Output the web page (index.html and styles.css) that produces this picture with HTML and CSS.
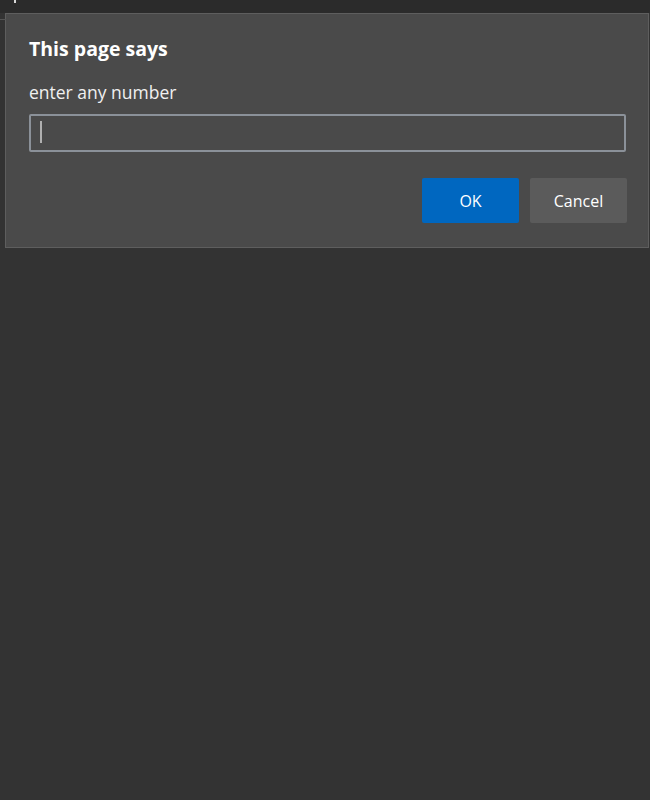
FILE: index.html
```html
<!DOCTYPE html>
<html>
<head>
<meta charset="utf-8">
<link rel="stylesheet" href="styles.css">
</head>
<body>
<div class="topbar"><span class="tick"></span><span class="sep"></span></div>
<div class="dialog">
  <div class="title">This page says</div>
  <div class="message">enter any number</div>
  <div class="field"><span class="caret"></span></div>
  <div class="actions">
    <button class="btn ok">OK</button>
    <button class="btn cancel">Cancel</button>
  </div>
</div>
</body>
</html>
```
FILE: styles.css
```css
html, body {
  margin: 0;
  padding: 0;
  background: #333333;
  width: 650px;
  height: 800px;
  overflow: hidden;
  font-family: "Open Sans", "Noto Sans", sans-serif;
}
.topbar {
  height: 13px;
  background: #2b2b2b;
  position: relative;
}
.tick {
  position: absolute;
  left: 14px;
  top: 0;
  width: 2px;
  height: 3px;
  background: #d8d8d8;
}
.sep {
  position: absolute;
  left: 0;
  top: 19px;
  width: 6px;
  height: 1px;
  background: #555;
}
.dialog {
  margin-left: 5px;
  width: 644px;
  height: 235px;
  background: #4a4a4a;
  border: 1px solid #5e5e5e;
  padding: 0 21px 0 23px;
  box-sizing: border-box;
  display: flex;
  flex-direction: column;
  color: #ffffff;
}
.title {
  font-weight: 700;
  font-size: 19.5px;
  margin-top: 22px;
  line-height: 26px;
  height: 26px;
}
.message {
  font-size: 17.5px;
  margin-top: 18px;
  line-height: 24px;
  height: 24px;
  color: #f0f0f0;
}
.field {
  margin-top: 10px;
  width: 597px;
  height: 38px;
  box-sizing: border-box;
  border: 2px solid #8b9199;
  border-radius: 2px;
  position: relative;
}
.caret {
  position: absolute;
  left: 9px;
  top: 5px;
  width: 2px;
  height: 22px;
  background: #b0b0b0;
}
.actions {
  margin-top: 26px;
  display: flex;
  justify-content: flex-end;
  gap: 11px;
}
.btn {
  width: 97px;
  height: 45px;
  border: none;
  border-radius: 2px;
  color: #ffffff;
  font-family: "Open Sans", "Noto Sans", sans-serif;
  font-size: 16px;
  padding: 0;
}
.ok { background: #0067c0; }
.cancel { background: #5b5b5b; }
```
